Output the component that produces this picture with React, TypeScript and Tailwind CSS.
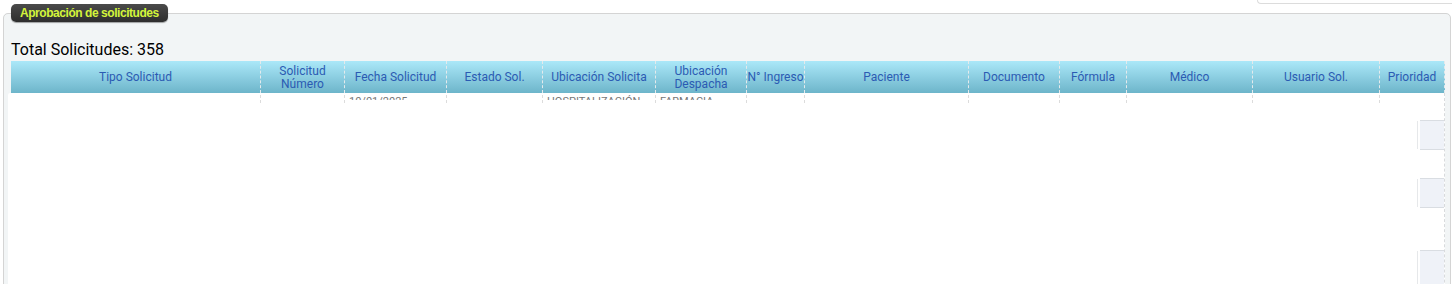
const columns = [
  { label: "Tipo Solicitud", width: "w-[250px]" },
  { label: "Solicitud\nNúmero", width: "w-[84px]" },
  { label: "Fecha Solicitud", width: "w-[102px]" },
  { label: "Estado Sol.", width: "w-[96px]" },
  { label: "Ubicación Solicita", width: "w-[113px]" },
  { label: "Ubicación\nDespacha", width: "w-[91px]" },
  { label: "N° Ingreso", width: "w-[58px]" },
  { label: "Paciente", width: "w-[164px]" },
  { label: "Documento", width: "w-[91px]" },
  { label: "Fórmula", width: "w-[67px]" },
  { label: "Médico", width: "w-[126px]" },
  { label: "Usuario Sol.", width: "w-[127px]" },
  { label: "Prioridad", width: "w-[65px]" },
];

const firstRow = ["", "", "10/01/2025", "", "HOSPITALIZACIÓN", "FARMACIA", "", "", "", "", "", "", ""];

function SideTab({ className }: { className: string }) {
  return (
    <div className={`flex w-[27px] h-[30px] ${className}`}>
      <span className="w-px my-[1px] bg-[#e6e8ea]" />
      <div className="ml-[2px] flex-1 bg-[#eff2f8] border-y border-[#d9dde2]" />
    </div>
  );
}

export default function App() {
  return (
    <div className="w-[1452px] h-[284px] overflow-hidden bg-white font-['Roboto','Liberation_Sans',sans-serif]">
      {/* Search box cut off above the viewport */}
      <div className="flex justify-end h-[4px]">
        <div className="w-[195px] h-[4px] border-l border-b border-[#dcdcdc] rounded-bl-[5px]" />
      </div>

      <fieldset className="ml-[3px] w-[1448px] h-[400px] border border-[#d4d4d4] rounded-[5px] bg-[#f2f5f6]">
        <legend className="ml-[7px] h-[18px] px-[9px] rounded-[5px] bg-gradient-to-b from-[#4a4a4a] to-[#2e2e2e] shadow-[0_1px_1px_rgba(0,0,0,0.35)] text-[12px] leading-[18px] font-bold text-[#d4f53a] font-['Liberation_Sans',Arial,sans-serif] tracking-[-0.45px]">
          Aprobación de solicitudes
        </legend>

        <div className="pl-[7px] pt-[18px] h-[39px] text-[16px] leading-[20px] text-black">
          Total Solicitudes: 358
        </div>

        <div className="ml-[7px] flex w-[1434px] h-[32px] bg-gradient-to-b from-[#abe8f9] to-[#6db5ca]">
          {columns.map((c) => (
            <div
              key={c.label}
              className={`${c.width} shrink-0 flex items-center justify-center pt-[1px] text-center whitespace-pre-line text-[12px] leading-[13px] text-[#2b5bb3] border-r border-dashed border-[#e4eaec]`}
            >
              {c.label}
            </div>
          ))}
        </div>

        <div className="ml-[4px] w-[1437px] h-[240px] bg-white border-r border-dashed border-[#d8dadc] rounded-tl-[2px] pt-[2px]">
          <div className="ml-[3px] flex h-[8px]">
            {columns.map((c, i) => (
              <div
                key={c.label}
                className={`${c.width} shrink-0 border-r border-dashed border-[#dcdcdc] last:border-r-0 pl-[4px]`}
              >
                <div className="h-[5px] overflow-hidden">
                  <span className="block pt-[1px] text-[11px] leading-[11px] text-[#777] whitespace-nowrap">
                    {firstRow[i]}
                  </span>
                </div>
              </div>
            ))}
          </div>

          <div className="flex flex-col items-end">
            <SideTab className="mt-[17px]" />
            <SideTab className="mt-[28px]" />
            <SideTab className="mt-[42px] h-[40px]" />
          </div>
        </div>
      </fieldset>
    </div>
  );
}
